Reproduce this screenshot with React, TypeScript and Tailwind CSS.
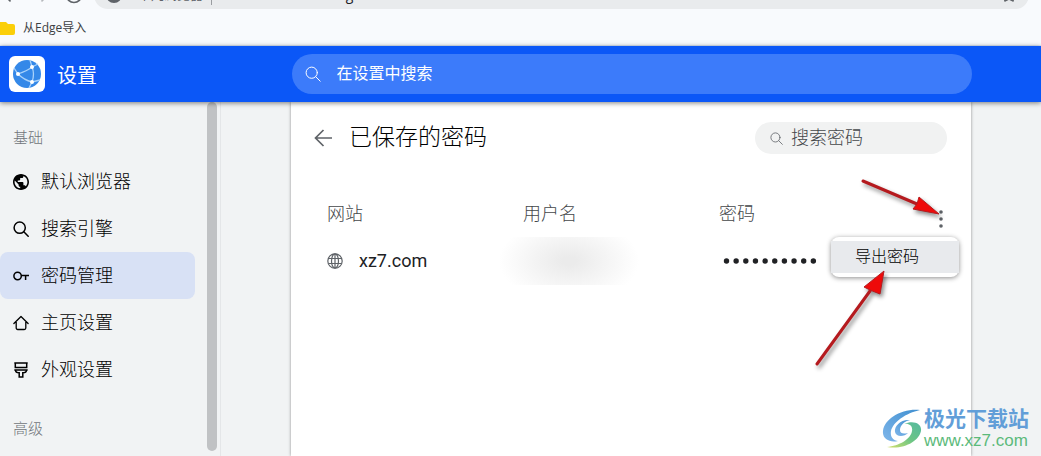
import React, { useState } from 'react';
import { ArrowLeft, ArrowRight, RotateCw, Star } from 'lucide-react';

const NAV_ITEMS = [
  { id: 'default', label: '默认浏览器', icon: 'globe' },
  { id: 'search', label: '搜索引擎', icon: 'search' },
  { id: 'password', label: '密码管理', icon: 'key' },
  { id: 'home', label: '主页设置', icon: 'home' },
  { id: 'theme', label: '外观设置', icon: 'brush' },
];

function SearchIcon({ className }: { className: string }) {
  return (
    <svg viewBox="0 0 16 16" className={className} fill="none" stroke="currentColor" strokeLinecap="round">
      <circle cx="6.7" cy="6.7" r="5.6" />
      <path d="M10.8 10.8l4.400 4.400" />
    </svg>
  );
}

function NavIcon({ name }: { name: string }) {
  if (name === 'globe') {
    return (
      <svg viewBox="2 2 20 20" className="size-4 shrink-0" fill="currentColor">
        <path d="M12 2C6.48 2 2 6.48 2 12s4.48 10 10 10 10-4.48 10-10S17.52 2 12 2zM4 12c0-.61.08-1.21.21-1.78L8.99 15v1c0 1.100.9 2 2 2v1.930C7.060 19.430 4 16.070 4 12zm13.890 5.400c-.26-.81-1-1.400-1.900-1.400h-1v-3c0-.55-.45-1-1-1h-6v-2h2c.55 0 1-.45 1-1V7h2c1.100 0 2-.9 2-2v-.41C17.920 5.770 20 8.650 20 12c0 2.080-.81 3.980-2.110 5.400z" />
      </svg>
    );
  }
  if (name === 'search') {
    return <SearchIcon className="size-4 shrink-0 stroke-[1.5]" />;
  }
  return (
    <svg viewBox="0 0 16 16" className="size-4 shrink-0" fill="none" stroke="currentColor" strokeWidth="1.5">
      {name === 'key' && <path d="M8.300 8a3.700 3.700 0 1 1-7.400 0 3.700 3.700 0 0 1 7.400 0zM8.300 7.600H16M12.600 7.600V12" />}
      {name === 'home' && <path strokeLinejoin="round" strokeLinecap="round" strokeWidth="1.3" d="M.9 8.500L8 1.500l7.100 7M3.200 7v6a1.500 1.500 0 0 0 1.500 1.500h6.600a1.500 1.500 0 0 0 1.500-1.500V7" />}
      {name === 'brush' && <path d="M1.300 1h13.400M2.300 1v4.500h11.400V1M1.300 8h13.400M2.500 8c0 2 1.500 2.800 3.700 2.800V15h3.600v-4.200c2.200 0 3.700-.8 3.700-2.800" />}
    </svg>
  );
}

function Watermark() {
  return (
    <div className="pointer-events-none absolute right-3 bottom-[5px] flex items-center gap-[2px]">
      <svg viewBox="0 0 40 40" className="size-10">
        <defs>
          <linearGradient id="wmBlue" x1="1" y1="0" x2="0" y2="1">
            <stop offset="0" stopColor="#3f8fd0" />
            <stop offset="1" stopColor="#7fb6ea" />
          </linearGradient>
          <linearGradient id="wmGreen" x1="1" y1="0" x2="0" y2="1">
            <stop offset="0" stopColor="#55b9a0" />
            <stop offset="0.5" stopColor="#6cc585" />
            <stop offset="1" stopColor="#d5e06c" />
          </linearGradient>
        </defs>
        <path fill="url(#wmBlue)" d="M38 1C20-1 2 10 1 22c-1 8 7 12 15 10-5-1-8-4-7-10C11 13 24 4 38 1z" />
        <path fill="url(#wmBlue)" d="M28 11c-9-1-16 6-15 12 1 5 9 5 13 1-4 1-8 1-8-3 0-5 5-9 10-10z" />
        <path fill="url(#wmGreen)" d="M22 15c9-4 18-1 17 7-2 10-17 19-34 16 12-1 24-8 25-16 1-5-3-8-8-7z" />
      </svg>
      <div className="flex flex-col">
        <span className="text-[21px] leading-6 font-bold text-[#629ed8]">极光下载站</span>
        <span className="font-['Liberation_Sans'] text-[17px] leading-5 text-[#5cba7b]">www.xz7.com</span>
      </div>
    </div>
  );
}

function Arrows() {
  return (
    <svg viewBox="0 0 130 200" className="pointer-events-none absolute top-[73px] right-[26px] h-[200px] w-[130px] drop-shadow-[2px_3px_2px_rgba(0,0,0,0.45)]">
      <g stroke="#b51a1e" strokeWidth="3" strokeLinecap="round">
        <path d="M48 6L102 29" />
        <path d="M2 189L55 116" />
      </g>
      <path fill="#ee0a0a" stroke="#b51a1e" strokeWidth="1" d="M124 39L104 22 102 29 98 34z" />
      <path fill="#ee0a0a" stroke="#b51a1e" strokeWidth="1" d="M69 96L49 112 55 115 65 119z" />
    </svg>
  );
}

export default function App() {
  const [active, setActive] = useState('password');

  return (
    <div className="relative flex h-screen flex-col overflow-hidden bg-[#f1f3f4] font-['Roboto','Noto_Sans_CJK_SC',sans-serif] text-[#202124]">
      {/* browser toolbar */}
      <div className="flex h-[9px] shrink-0 items-end overflow-hidden bg-[#f8fafd] pr-3 text-[#5f6368]">
        <div className="flex h-7 w-[94px] shrink-0 items-center gap-3">
          <ArrowLeft className="size-5" />
          <ArrowRight className="size-5 text-[#b5b8bc]" />
          <RotateCw className="size-5" />
        </div>
        <div className="flex h-7 flex-1 items-center gap-4 rounded-full bg-[#e9ebed] px-3 text-[13px] leading-4">
          <svg viewBox="0 0 16 16" className="size-4 shrink-0" fill="currentColor"><circle cx="8" cy="8" r="8" /></svg>
          <span className="flex flex-1 items-center gap-2">
            华凡浏览器
            <i className="h-5 w-px bg-[#9a9da1]" />
            <span className="font-['Open_Sans'] text-[14px]">huachrome://<span className="text-[#202124]">settings</span>/</span>
          </span>
          <Star className="size-4" />
        </div>
      </div>

      {/* bookmarks */}
      <div className="flex h-[37px] shrink-0 items-center gap-2 border-b border-[#dfeafa] bg-[#f8fafd] pt-[2px]">
        <svg viewBox="0 0 15 13" className="h-[13px] w-[15px]" fill="#fbcf09">
          <path d="M0 0h6l2 2h5a2 2 0 0 1 2 2v7a2 2 0 0 1-2 2H0z" />
        </svg>
        <a href="#import" className="font-['Open_Sans','Noto_Sans_CJK_SC',sans-serif] text-[12px] leading-4 text-[#3c4043]">从Edge导入</a>
      </div>

      <header className="z-10 flex h-14 shrink-0 items-center bg-[#0b57f7] text-white shadow-[0_1px_5px_rgba(0,0,0,0.5)]">
        <div className="flex w-[222px] shrink-0 items-center gap-3 pl-[9px]">
          <svg viewBox="0 0 36 36" className="size-9">
            <rect width="36" height="36" rx="6" fill="#fff" />
            <circle cx="18" cy="18" r="14" fill="#3488e8" />
            <g fill="none" stroke="#a9d2fa" strokeWidth="1.3">
              <path d="M9 18Q18 15 23 11Q26 18 23 26Q15 24 9 18M9 18L5 12M23 11L21 4M23 11L29 8M23 26L31 24M23 26L20 32" />
            </g>
            <g fill="#fff">
              <circle cx="9" cy="18" r="2" />
              <circle cx="23" cy="11" r="2" />
              <circle cx="23" cy="26" r="2" />
            </g>
          </svg>
          <h1 className="pt-1 text-[20px] leading-7">设置</h1>
        </div>
        <div className="flex flex-1 justify-center">
          <label className="flex h-10 w-full max-w-[680px] items-center gap-4 rounded-full bg-[#3c7bfa] px-[13px]">
            <SearchIcon className="size-4 shrink-0" />
            <input type="text" aria-label="在设置中搜索" placeholder="在设置中搜索" className="w-full bg-transparent text-[16px] leading-6 outline-hidden placeholder:text-white" />
          </label>
        </div>
      </header>

      <div className="flex min-h-0 flex-1">
        <aside className="flex w-[221px] shrink-0 justify-between border-r border-[#e4e6e8] pr-[3px]">
          <nav className="w-[195px] pt-6">
            <h2 className="pl-[13px] text-[15px] leading-6 font-light text-[#70757a]">基础</h2>
            <div className="flex flex-col pt-2">
              {NAV_ITEMS.map(item => (
                <button
                  key={item.id}
                  type="button"
                  onClick={() => setActive(item.id)}
                  className={`flex h-[47px] items-center gap-3 rounded-lg pl-[13px] text-[18px] leading-6 font-light text-black ${active === item.id ? 'bg-[#d8e1f5]' : ''}`}
                >
                  <NavIcon name={item.icon} />
                  {item.label}
                </button>
              ))}
            </div>
            <h2 className="pt-6 pl-[13px] text-[15px] leading-6 font-light text-[#70757a]">高级</h2>
          </nav>
          <div className="mb-[5px] w-[10px] rounded-full bg-[#c0c2c4]" />
        </aside>

        <main className="flex flex-1 justify-center">
          <section className="relative w-full max-w-[680px] bg-white shadow-[0_0_3px_rgba(0,0,0,0.4)]">
            <div className="flex items-center pt-5 pr-6 pl-5">
              <button type="button" aria-label="返回" className="flex size-6 items-center justify-center text-[#5f6368]">
                <svg viewBox="0 0 18 18" className="size-[18px]" fill="none" stroke="currentColor" strokeWidth="1.7">
                  <path d="M18 9H1.500M9.500 1L1.500 9l8 8" />
                </svg>
              </button>
              <h2 className="flex-1 pl-[14px] text-[23px] leading-8 font-light text-black">已保存的密码</h2>
              <label className="flex h-8 w-48 items-center gap-2 rounded-full bg-[#f1f2f2] pr-4 pl-[15px] text-[#5f6368]">
                <SearchIcon className="size-[13px] shrink-0" />
                <input type="text" aria-label="搜索密码" placeholder="搜索密码" className="w-full min-w-0 bg-transparent text-[18px] leading-6 font-light outline-hidden placeholder:text-[#44474a]" />
              </label>
            </div>

            <table className="mt-9 w-full table-fixed text-left text-[18px] leading-6">
              <thead>
                <tr className="h-[47px] text-[#44474a]">
                  <th className="w-[232px] pl-9 font-light">网站</th>
                  <th className="w-[196px] font-light">用户名</th>
                  <th className="font-light">密码</th>
                  <th className="w-16">
                    <button type="button" aria-label="更多操作" className="ml-[30px] flex h-7 w-2 items-end justify-center">
                      <svg viewBox="0 0 4 18" className="h-[18px] w-1" fill="#5f6368">
                        <circle cx="2" cy="2" r="1.800" /><circle cx="2" cy="9" r="1.800" /><circle cx="2" cy="16" r="1.800" />
                      </svg>
                    </button>
                  </th>
                </tr>
              </thead>
              <tbody>
                <tr className="h-12">
                  <td className="pl-9">
                    <span className="flex items-center gap-4">
                      <svg viewBox="0 0 16 16" className="size-4" fill="none" stroke="#5f6368" strokeWidth="1.200">
                        <circle cx="8" cy="8" r="7.200" />
                        <ellipse cx="8" cy="8" rx="3.500" ry="7.200" />
                        <path d="M1.500 5.500h13M1.500 10.500h13M8 1v14" />
                      </svg>
                      xz7.com
                    </span>
                  </td>
                  <td>
                    <div className="-ml-6 h-12 w-[140px] bg-[radial-gradient(ellipse_70px_42px_at_center,#ebebeb_10%,#ffffff_100%)]" />
                  </td>
                  <td>
                    <svg viewBox="0 0 94 6" className="ml-1 h-[6px] w-[94px]" fill="#202124">
                      {Array.from({ length: 10 }, (_, i) => (
                        <circle key={i} cx={3.5 + i * 9.65} cy="3" r="2.700" />
                      ))}
                    </svg>
                  </td>
                  <td />
                </tr>
              </tbody>
            </table>

            <div className="absolute top-[135px] right-3 w-32 rounded-lg bg-white py-1 shadow-[0_1px_5px_rgba(0,0,0,0.45)]">
              <button type="button" className="block h-8 w-full bg-[#e8eaed] pl-6 text-left text-[16px] leading-6 font-light text-black">导出密码</button>
            </div>
            <Arrows />
          </section>
        </main>
      </div>
      <Watermark />
    </div>
  );
}
